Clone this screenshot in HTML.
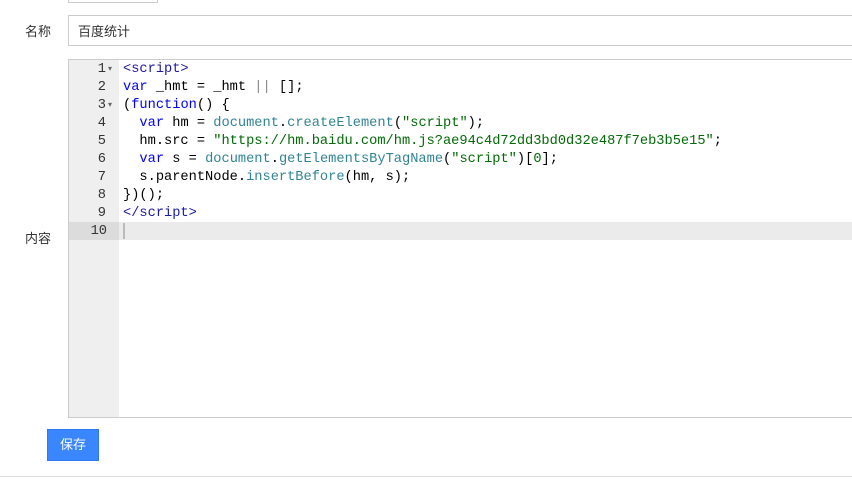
<!DOCTYPE html>
<html><head><meta charset="utf-8"><style>
body{margin:0;width:852px;height:481px;background:#fff;position:relative;overflow:hidden;font-family:"Liberation Sans","Noto Sans CJK SC",sans-serif}
.topbtn{position:absolute;left:68px;top:-2px;width:88px;height:4px;border:1px solid #ccc;border-top:none}
.lbl{position:absolute;font-size:13px;color:#333}
.inp{position:absolute;left:68px;top:15px;width:790px;height:31px;border:1px solid #ccc;box-sizing:border-box;font-size:13px;color:#333;padding-left:9px;line-height:31px}
.ed{position:absolute;left:68px;top:59px;width:790px;height:359px;border:1px solid #ccc;box-sizing:border-box;background:#fff}
.gut{position:absolute;left:0;top:0;width:50px;height:100%;background:#efefef}
.code{position:absolute;left:0;top:0;width:100%;font-family:"Liberation Mono",monospace;font-size:13.68px}
.ln{height:18px;line-height:18px;position:relative;white-space:pre}
.n{position:absolute;left:0;top:1px;width:37px;text-align:right;color:#333}
.f{position:absolute;left:39px;top:1px;font-size:8px;color:#666}
.t{position:absolute;left:54px;top:1px;color:#000}
.act{background:#ebebeb}
.act .n{background:#dcdcdc;width:50px;padding-right:12px;box-sizing:border-box;top:0;line-height:20px;height:18px}
.k{color:#0000ff}.s{color:#036a07}.d{color:#318495}.tg{color:#1a1aa6}.o{color:#888}
.btn{position:absolute;left:47px;top:429px;width:52px;height:32px;background:#3a86ff;border:1px solid #2d7af5;box-sizing:border-box;color:#fff;font-size:13px;text-align:center;line-height:30px}
.bl{position:absolute;left:0;top:476px;width:852px;height:1px;background:#ddd}
</style></head><body>
<div class="topbtn"></div>
<div class="lbl" style="left:25px;top:21px">名称</div>
<div class="inp">百度统计</div>
<div class="lbl" style="left:25px;top:228px">内容</div>
<div class="ed"><div class="gut"></div>
<div class="code">
<div class="ln"><span class="n">1</span><span class="f">▾</span><span class="t"><span class="tg">&lt;script&gt;</span></span></div>
<div class="ln"><span class="n">2</span><span class="t"><span class="k">var</span> _hmt = _hmt <span class="o">||</span> [];</span></div>
<div class="ln"><span class="n">3</span><span class="f">▾</span><span class="t">(<span class="k">function</span>() {</span></div>
<div class="ln"><span class="n">4</span><span class="t">  <span class="k">var</span> hm = <span class="d">document</span>.<span class="d">createElement</span>(<span class="s">"script"</span>);</span></div>
<div class="ln"><span class="n">5</span><span class="t">  hm.src = <span class="s">"https://hm.baidu.com/hm.js?ae94c4d72dd3bd0d32e487f7eb3b5e15"</span>;</span></div>
<div class="ln"><span class="n">6</span><span class="t">  <span class="k">var</span> s = <span class="d">document</span>.<span class="d">getElementsByTagName</span>(<span class="s">"script"</span>)[<span class="s">0</span>];</span></div>
<div class="ln"><span class="n">7</span><span class="t">  s.parentNode.<span class="d">insertBefore</span>(hm, s);</span></div>
<div class="ln"><span class="n">8</span><span class="t">})();</span></div>
<div class="ln"><span class="n">9</span><span class="t"><span class="tg">&lt;/script&gt;</span></span></div>
<div class="ln act"><span class="n">10</span><span class="t" style="border-left:2px solid #bbb;height:16px;top:1px"></span></div>
</div></div>
<div class="btn">保存</div>
<div class="bl"></div>
</body></html>
